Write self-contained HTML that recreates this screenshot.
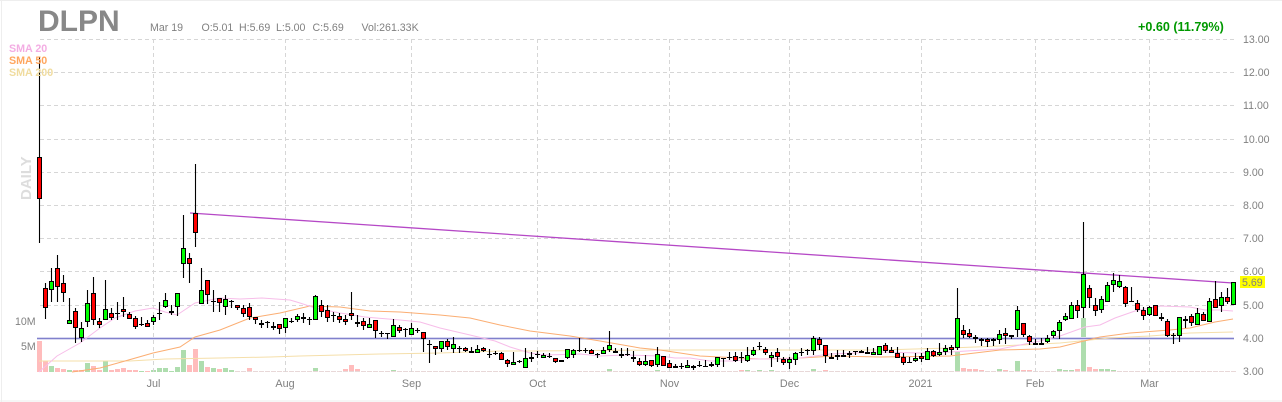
<!DOCTYPE html>
<html><head><meta charset="utf-8"><title>DLPN</title>
<style>
html,body{margin:0;padding:0;background:#fff}
body{width:1282px;height:402px;overflow:hidden;position:relative}
svg{position:absolute;left:0;top:0;display:block}
text{font-family:"Liberation Sans",Arial,sans-serif}
.t{filter:blur(.25px)}
.g{fill:#808080;font-size:10.6px}
.a{fill:#808080;font-size:10.6px}
.m{fill:#808080;font-size:10.8px;text-anchor:middle}
</style></head><body>
<svg width="1282" height="402" viewBox="0 0 1282 402" xmlns="http://www.w3.org/2000/svg">
<rect x="0" y="0" width="1282" height="402" fill="#fff"/>
<path d="M0 .5H1282M1.5 0V402M0 401H1282" stroke="#eee" fill="none"/>
<!-- volume -->
<path fill="#ffbcbc" d="M37 341h5V372h-5zM43 361h5V372h-5zM55 368h5V372h-5zM61 369h5V372h-5zM73 370h5V372h-5zM79 370h5V372h-5zM91 366h5V372h-5zM97 370h5V372h-5zM109 370h5V372h-5zM115 369h5V372h-5zM121 368h5V372h-5zM127 370h5V372h-5zM133 370h5V372h-5zM145 371h5V372h-5zM187 365h5V372h-5zM193 349h5V372h-5zM205 367h5V372h-5zM217 369h5V372h-5zM247 368h5V372h-5zM343 369h5V372h-5zM349 365h5V372h-5zM355 369h5V372h-5zM739 370h5V372h-5zM823 370h5V372h-5zM961 368h5V372h-5zM967 369h5V372h-5zM973 369h5V372h-5zM979 370h5V372h-5zM1003 370h5V372h-5zM1021 370h5V372h-5zM1027 370h5V372h-5zM1075 369h5V372h-5zM1087 367h5V372h-5zM1093 369h5V372h-5z"/>
<path fill="#aeddae" d="M49 366h5V372h-5zM67 370h5V372h-5zM85 363h5V372h-5zM103 361h5V372h-5zM139 371h5V372h-5zM151 370h5V372h-5zM157 368h5V372h-5zM163 368h5V372h-5zM169 371h5V372h-5zM175 367h5V372h-5zM181 350h5V372h-5zM199 361h5V372h-5zM211 368h5V372h-5zM223 368h5V372h-5zM229 370h5V372h-5zM313 368h5V372h-5zM391 370h5V372h-5zM607 369h5V372h-5zM655 370h5V372h-5zM745 370h5V372h-5zM757 370h5V372h-5zM769 370h5V372h-5zM811 369h5V372h-5zM955 352h5V372h-5zM997 369h5V372h-5zM1015 361h5V372h-5zM1057 369h5V372h-5zM1063 370h5V372h-5zM1069 370h5V372h-5zM1081 318h5V372h-5zM1099 369h5V372h-5zM1105 369h5V372h-5zM1111 370h5V372h-5z"/>
<path d="M235 371.5H1236" stroke="#e8d8d8" stroke-dasharray="5 1" fill="none"/>
<!-- grid -->
<path d="M40 39.5H1234M40 72.5H1234M40 105.5H1234M40 139.5H1234M40 172.5H1234M40 205.5H1234M40 238.5H1234M40 271.5H1234M40 305.5H1234M40 338.5H1234" stroke="#d6d6d6" stroke-dasharray="4 3" fill="none"/>
<path d="M153.5 39V372M285.5 39V372M411.5 39V372M537.5 39V372M669.5 39V372M789.5 39V372M921.5 39V372M1035.5 39V372M1149.5 39V372" stroke="#d6d6d6" stroke-dasharray="4 3" fill="none"/>
<!-- horizontal level -->
<path d="M37 338.5H1234" stroke="#d8d8f0" stroke-width="3" fill="none"/>
<path d="M37 338.5H1234" stroke="#8080cc" stroke-width="1" fill="none"/>
<!-- SMA -->
<polyline fill="none" stroke="#f5dfaa" stroke-width="1" points="39,361 130,361 165,359 220,358 270,357 300,356 380,354 440,353 500,351 530,351 660,350 880,350 950,348 1000,346 1060,343 1110,338 1150,336 1190,333 1233,332"/>
<polyline fill="none" stroke="#fbae73" stroke-width="1" points="72,372 100,368 125,361 153,353 180,347 195,337 220,330 250,318 280,313 310,306 340,307 370,311 400,312 440,315 470,318 500,325 530,331 570,336 600,341 640,348 660,350 700,356 760,359 800,358 835,356 880,357 950,356 1000,350 1040,349 1060,347 1100,337 1130,333 1170,330 1190,328 1215,322 1233,319"/>
<polyline fill="none" stroke="#f7bde9" stroke-width="1" points="39,372 57,356 80,343 100,328 115,318 135,311 153,308 165,312 177,315 195,303 220,298 240,299 262,298 290,300 300,303 315,308 340,313 365,317 400,320 420,322 440,328 470,335 495,341 510,347 530,353 545,355 580,354 600,356 625,355 660,356 675,358 690,358 710,361 735,361 750,359 775,359 800,358 830,354 880,352 920,353 950,352 1000,349 1020,345 1040,341 1060,336 1085,327 1100,325 1115,318 1135,311 1160,306 1190,307 1205,310 1220,310 1233,311"/>
<!-- trend line -->
<path d="M190 213L1233 283" stroke="#b548c6" stroke-width="1.3" fill="none"/>
<!-- wicks -->
<path fill="none" stroke="#000" stroke-width="1.1" d="M39.5 57V243M45.5 283V319M51.5 268V302M57.5 255V302M63.5 275V302M69.5 298V323M75.5 308V343M81.5 322V342M87.5 290V327M93.5 277V325M99.5 318V328M105.5 280V320M111.5 308V320M117.5 302V320M123.5 297V317M129.5 312V319M135.5 316V329M141.5 317V326M147.5 320V327M153.5 315V325M159.5 302V320M165.5 293V308M171.5 305V315M177.5 293V316M183.5 215V278M189.5 253V283M195.5 164V247M201.5 268V303M207.5 280V304M213.5 290V312M219.5 298V312M225.5 295V315M231.5 300V308M237.5 305V310M243.5 305V317M249.5 303V320M255.5 317V324M261.5 320V328M267.5 321V328M273.5 322V330M279.5 324V334M285.5 318V333M291.5 318V323M297.5 314V322M303.5 313V323M309.5 317V325M315.5 295V319M321.5 300V317M327.5 305V322M333.5 312V322M339.5 313V323M345.5 315V325M351.5 292V320M357.5 315V327M363.5 318V330M369.5 318V328M375.5 320V338M381.5 331V337M387.5 333V339M393.5 319V336M399.5 325V333M405.5 328V337M411.5 323V335M417.5 328V333M423.5 332V352M429.5 340V363M435.5 346V355M441.5 341V352M447.5 339V350M453.5 337V353M459.5 346V353M465.5 347V352M471.5 347V352M477.5 345V353M483.5 347V352M489.5 349V358M495.5 351V355M501.5 352V360M507.5 359V367M513.5 352V365M519.5 360V363M525.5 348V367M531.5 352V362M537.5 351V358M543.5 353V358M549.5 353V358M555.5 358V363M567.5 349V359M573.5 349V358M579.5 338V352M585.5 348V353M591.5 349V354M597.5 353V358M603.5 347V354M609.5 331V352M615.5 348V353M621.5 348V358M627.5 348V356M633.5 351V362M639.5 358V366M645.5 355V366M651.5 360V367M657.5 347V367M663.5 356V365M669.5 360V368M675.5 364V367M681.5 363V369M687.5 360V368M693.5 365V370M699.5 361V367M705.5 360V367M711.5 362V367M717.5 357V367M723.5 358V367M729.5 352V360M735.5 352V362M741.5 352V363M747.5 347V362M753.5 347V356M759.5 342V350M765.5 347V355M771.5 352V367M777.5 348V362M783.5 357V365M789.5 357V369M795.5 352V365M801.5 348V356M807.5 349V355M813.5 336V355M819.5 337V350M825.5 345V363M831.5 353V358M837.5 350V360M843.5 350V357M849.5 351V358M855.5 351V355M861.5 350V352M867.5 347V354M873.5 348V355M885.5 343V353M891.5 347V353M897.5 347V357M903.5 353V365M909.5 357V363M915.5 353V362M921.5 353V362M927.5 348V359M933.5 350V357M939.5 343V356M945.5 345V355M951.5 345V355M957.5 288V350M963.5 325V338M969.5 329V338M975.5 335V343M981.5 338V346M987.5 338V347M993.5 338V346M999.5 330V344M1005.5 328V344M1011.5 335V339M1017.5 306V337M1023.5 323V337M1029.5 335V345M1035.5 339V343M1041.5 338V343M1047.5 335V343M1053.5 330V338M1059.5 320V339M1065.5 313V321M1071.5 302V318M1077.5 300V318M1083.5 222V318M1089.5 285V308M1095.5 298V316M1101.5 296V313M1107.5 282V301M1113.5 273V292M1119.5 275V288M1125.5 286V307M1131.5 287V302M1137.5 300V312M1143.5 307V320M1149.5 306V316M1155.5 305V315M1161.5 313V321M1167.5 319V337M1173.5 333V344M1179.5 317V342M1185.5 316V328M1191.5 314V326M1197.5 308V324M1203.5 312V321M1209.5 298V321M1215.5 281V308M1221.5 292V312M1227.5 288V304"/>
<!-- doji -->
<path fill="none" stroke="#000" d="M115 313.5h5M139 324.5h5M157 313.5h5M211 301.5h5M229 301.5h5M265 322.5h5M289 321.5h5M307 319.5h5M331 315.5h5M379 333.5h5M385 333.5h5M403 329.5h5M415 330.5h5M427 344.5h5M457 348.5h5M487 354.5h5M493 353.5h5M517 361.5h5M535 354.5h5M547 356.5h5M577 350.5h5M583 350.5h5M595 354.5h5M625 354.5h5M679 366.5h5M697 365.5h5M703 366.5h5M721 358.5h5M727 357.5h5M739 357.5h5M757 346.5h5M799 352.5h5M805 350.5h5M853 351.5h5M907 362.5h5M1129 301.5h5M1171 335.5h5"/>
<path fill="none" stroke="#000" stroke-width="2" d="M169 312h5M259 324h5M271 327h5M301 318h5M355 323h5M469 352h5M529 358h5M559 361h5M613 352h5M619 355h5M631 358h5M673 367h5M691 367h5M709 365h5M829 358h5M835 356h5M841 356h5M847 354h5M859 352h5M865 353h5M973 338h5M979 340h5M991 340h5M1009 336h5M1033 344h5M1039 344h5M1159 318h5M1183 320h5"/>
<!-- red bodies -->
<path fill="#f00" stroke="#000" d="M37.5 157.5h4V198.5h-4zM43.5 288.5h4V307.5h-4zM55.5 268.5h4V286.5h-4zM61.5 283.5h4V292.5h-4zM73.5 311.5h4V327.5h-4zM91.5 293.5h4V319.5h-4zM97.5 321.5h4V324.5h-4zM109.5 313.5h4V317.5h-4zM121.5 309.5h4V311.5h-4zM127.5 314.5h4V318.5h-4zM133.5 318.5h4V326.5h-4zM145.5 323.5h4V326.5h-4zM187.5 258.5h4V263.5h-4zM193.5 213.5h4V232.5h-4zM205.5 280.5h4V294.5h-4zM217.5 298.5h4V302.5h-4zM235.5 305.5h4V307.5h-4zM241.5 308.5h4V313.5h-4zM247.5 307.5h4V316.5h-4zM253.5 317.5h4V319.5h-4zM277.5 324.5h4V328.5h-4zM319.5 305.5h4V311.5h-4zM325.5 310.5h4V317.5h-4zM337.5 316.5h4V319.5h-4zM343.5 319.5h4V321.5h-4zM349.5 313.5h4V315.5h-4zM361.5 321.5h4V325.5h-4zM373.5 320.5h4V330.5h-4zM397.5 327.5h4V330.5h-4zM421.5 332.5h4V338.5h-4zM433.5 346.5h4V348.5h-4zM445.5 341.5h4V346.5h-4zM463.5 348.5h4V350.5h-4zM481.5 348.5h4V350.5h-4zM499.5 353.5h4V359.5h-4zM505.5 360.5h4V363.5h-4zM553.5 358.5h4V361.5h-4zM589.5 350.5h4V353.5h-4zM637.5 361.5h4V364.5h-4zM649.5 360.5h4V365.5h-4zM661.5 356.5h4V365.5h-4zM667.5 363.5h4V367.5h-4zM733.5 356.5h4V360.5h-4zM763.5 349.5h4V352.5h-4zM775.5 352.5h4V356.5h-4zM781.5 359.5h4V362.5h-4zM817.5 339.5h4V344.5h-4zM823.5 345.5h4V355.5h-4zM883.5 345.5h4V350.5h-4zM889.5 350.5h4V352.5h-4zM895.5 353.5h4V357.5h-4zM901.5 357.5h4V362.5h-4zM919.5 356.5h4V358.5h-4zM931.5 351.5h4V355.5h-4zM949.5 347.5h4V349.5h-4zM961.5 330.5h4V334.5h-4zM967.5 333.5h4V336.5h-4zM985.5 339.5h4V341.5h-4zM1003.5 333.5h4V335.5h-4zM1021.5 323.5h4V334.5h-4zM1027.5 336.5h4V341.5h-4zM1075.5 305.5h4V310.5h-4zM1087.5 288.5h4V297.5h-4zM1093.5 305.5h4V310.5h-4zM1123.5 287.5h4V303.5h-4zM1135.5 303.5h4V309.5h-4zM1141.5 310.5h4V315.5h-4zM1153.5 305.5h4V315.5h-4zM1165.5 321.5h4V335.5h-4zM1189.5 316.5h4V322.5h-4zM1201.5 314.5h4V320.5h-4zM1213.5 299.5h4V307.5h-4zM1225.5 297.5h4V301.5h-4z"/>
<!-- green bodies -->
<path fill="#0f0" stroke="#000" d="M49.5 281.5h4V289.5h-4zM67.5 320.5h4V323.5h-4zM79.5 328.5h4V337.5h-4zM85.5 303.5h4V321.5h-4zM103.5 309.5h4V319.5h-4zM151.5 317.5h4V321.5h-4zM163.5 300.5h4V306.5h-4zM175.5 293.5h4V306.5h-4zM181.5 248.5h4V263.5h-4zM199.5 290.5h4V303.5h-4zM223.5 299.5h4V306.5h-4zM283.5 318.5h4V327.5h-4zM295.5 316.5h4V319.5h-4zM313.5 296.5h4V319.5h-4zM367.5 324.5h4V327.5h-4zM391.5 325.5h4V336.5h-4zM409.5 328.5h4V334.5h-4zM439.5 341.5h4V348.5h-4zM451.5 344.5h4V348.5h-4zM475.5 349.5h4V352.5h-4zM511.5 362.5h4V364.5h-4zM523.5 358.5h4V367.5h-4zM541.5 355.5h4V357.5h-4zM565.5 349.5h4V357.5h-4zM571.5 350.5h4V354.5h-4zM601.5 350.5h4V353.5h-4zM607.5 345.5h4V349.5h-4zM643.5 361.5h4V364.5h-4zM655.5 354.5h4V364.5h-4zM685.5 365.5h4V367.5h-4zM715.5 357.5h4V364.5h-4zM745.5 355.5h4V360.5h-4zM751.5 350.5h4V354.5h-4zM769.5 355.5h4V357.5h-4zM787.5 359.5h4V362.5h-4zM793.5 353.5h4V359.5h-4zM811.5 338.5h4V350.5h-4zM871.5 352.5h4V354.5h-4zM877.5 346.5h4V354.5h-4zM913.5 358.5h4V360.5h-4zM925.5 351.5h4V359.5h-4zM937.5 352.5h4V354.5h-4zM943.5 348.5h4V351.5h-4zM955.5 318.5h4V347.5h-4zM997.5 334.5h4V339.5h-4zM1015.5 310.5h4V329.5h-4zM1045.5 338.5h4V341.5h-4zM1051.5 331.5h4V335.5h-4zM1057.5 322.5h4V330.5h-4zM1063.5 316.5h4V319.5h-4zM1069.5 305.5h4V318.5h-4zM1081.5 274.5h4V307.5h-4zM1099.5 299.5h4V309.5h-4zM1105.5 285.5h4V301.5h-4zM1111.5 280.5h4V284.5h-4zM1117.5 281.5h4V286.5h-4zM1147.5 307.5h4V314.5h-4zM1177.5 317.5h4V335.5h-4zM1195.5 313.5h4V324.5h-4zM1207.5 301.5h4V321.5h-4zM1219.5 297.5h4V305.5h-4zM1231.5 282.5h4V304.5h-4z"/>
<!-- labels -->
<g class="t">
<text x="38" y="31" font-size="30" font-weight="700" fill="#888">DLPN</text>
<text class="g" x="150" y="31">Mar 19</text>
<text class="g" x="201.5" y="31">O:5.01</text>
<text class="g" x="239" y="31">H:5.69</text>
<text class="g" x="276" y="31">L:5.00</text>
<text class="g" x="312.5" y="31">C:5.69</text>
<text class="g" x="361.5" y="31">Vol:261.33K</text>
<text x="1138" y="31" font-size="12.6" font-weight="700" fill="#090">+0.60 (11.79%)</text>
<text x="9" y="52" font-size="10.7" font-weight="700" fill="#f3a9e2" opacity=".95">SMA 20</text>
<text x="9" y="64" font-size="10.7" font-weight="700" fill="#ffa65e">SMA 50</text>
<text x="9" y="76" font-size="10.7" font-weight="700" fill="#f0dc9f">SMA 200</text>
<text transform="translate(31 200) rotate(-90)" font-size="15" font-weight="700" fill="#ddd">DAILY</text>
<text class="a" x="1243" y="43">13.00</text>
<text class="a" x="1243" y="76">12.00</text>
<text class="a" x="1243" y="109">11.00</text>
<text class="a" x="1243" y="143">10.00</text>
<text class="a" x="1243" y="176">9.00</text>
<text class="a" x="1243" y="209">8.00</text>
<text class="a" x="1243" y="242">7.00</text>
<text class="a" x="1243" y="275">6.00</text>
<text class="a" x="1243" y="309">5.00</text>
<text class="a" x="1243" y="342">4.00</text>
<text class="a" x="1243" y="375">3.00</text>
<rect x="1240" y="276" width="25" height="12" fill="#ff0"/>
<text class="a" x="1242" y="286">5.69</text>
<text class="a" x="15" y="325">10M</text>
<text class="a" x="21" y="350">5M</text>
<text class="m" x="153.5" y="387">Jul</text>
<text class="m" x="285" y="387">Aug</text>
<text class="m" x="411.5" y="387">Sep</text>
<text class="m" x="537.5" y="387">Oct</text>
<text class="m" x="669.5" y="387">Nov</text>
<text class="m" x="789.5" y="387">Dec</text>
<text class="m" x="920.5" y="387">2021</text>
<text class="m" x="1035" y="387">Feb</text>
<text class="m" x="1149.5" y="387">Mar</text>
</g>
</svg>
</body></html>
